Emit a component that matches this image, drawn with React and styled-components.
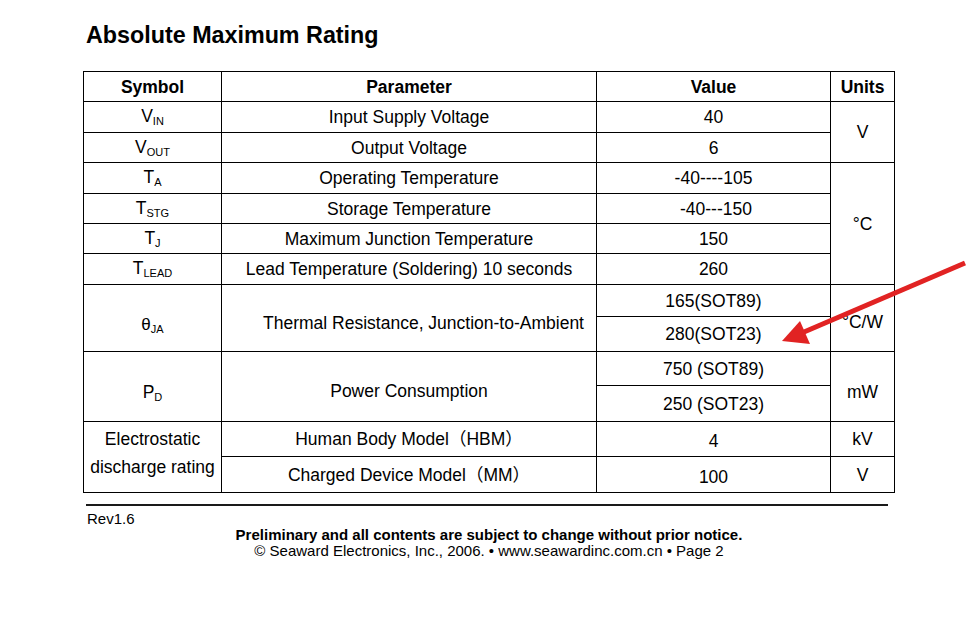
import React from 'react';
import styled, { createGlobalStyle } from 'styled-components';

const GlobalStyle = createGlobalStyle`
  html, body {
    margin: 0;
    padding: 0;
    background: #fff;
  }
  body {
    font-family: "Liberation Sans", Arial, "Noto Sans CJK SC", sans-serif;
    color: #000;
  }
`;

const Page = styled.div`
  position: relative;
  width: 978px;
  height: 635px;
  overflow: hidden;
  padding-top: 23px;
  box-sizing: border-box;
`;

const Title = styled.h1`
  margin: 0 0 22px 86px;
  font-size: 23.3px;
  line-height: 25.7px;
  font-weight: 700;
`;

const Table = styled.div`
  display: grid;
  grid-template-columns: 138px 375px 234px 64px;
  grid-template-rows: 30px 31px 30px 31px 30px 30px 31px 32px 35px 34px 36px 35px 36px;
  margin-left: 83px;
  width: max-content;
  border-left: 1px solid #000;
  border-top: 1px solid #000;
`;

const Cell = styled.div`
  grid-column: ${(p) => p.$col} / span ${(p) => p.$colSpan || 1};
  grid-row: ${(p) => p.$row} / span ${(p) => p.$rowSpan || 1};
  display: flex;
  align-items: center;
  justify-content: center;
  text-align: center;
  box-sizing: border-box;
  border-right: 1px solid #000;
  border-bottom: 1px solid #000;
  font-size: 17.5px;
  line-height: ${(p) => p.$lineHeight || 20}px;
  font-weight: ${(p) => (p.$head ? 700 : 400)};
  padding-top: ${(p) => p.$drop || 1}px;
  padding-bottom: ${(p) => p.$raise || 0}px;
  padding-left: ${(p) => p.$indent || 0}px;
  white-space: nowrap;
`;

const Sub = styled.span`
  font-size: 11px;
  position: relative;
  top: 3px;
`;

const Theta = styled.span`
  font-size: 17px;
`;

const Rule = styled.div`
  width: 802px;
  height: 2px;
  background: #1a1a1a;
  margin: 11px 0 0 86px;
`;

const Rev = styled.div`
  margin: 5px 0 0 87px;
  font-size: 15px;
  line-height: 16px;
`;

const Notice = styled.div`
  width: 978px;
  text-align: center;
  font-size: 15px;
  line-height: 16px;
  font-weight: ${(p) => (p.$bold ? 700 : 400)};
`;

const Overlay = styled.svg`
  position: absolute;
  left: 0;
  top: 0;
  pointer-events: none;
`;

const Sym = ({ base, sub }) => (
  <span>
    {base}
    <Sub>{sub}</Sub>
  </span>
);

const rows = [
  { base: 'V', sub: 'IN', param: 'Input Supply Voltage', value: '40' },
  { base: 'V', sub: 'OUT', param: 'Output Voltage', value: '6' },
  { base: 'T', sub: 'A', param: 'Operating Temperature', value: '-40----105' },
  { base: 'T', sub: 'STG', param: 'Storage Temperature', value: '\u00a0-40---150' },
  { base: 'T', sub: 'J', param: 'Maximum Junction Temperature', value: '150' },
  { base: 'T', sub: 'LEAD', param: 'Lead Temperature (Soldering) 10 seconds', value: '260' },
];

export default function App() {
  return (
    <>
      <GlobalStyle />
      <Page>
        <Title>Absolute Maximum Rating</Title>
        <Table>
          <Cell $col={1} $row={1} $head>Symbol</Cell>
          <Cell $col={2} $row={1} $head>Parameter</Cell>
          <Cell $col={3} $row={1} $head>Value</Cell>
          <Cell $col={4} $row={1} $head>Units</Cell>

          {rows.map((r, i) => (
            <React.Fragment key={r.param}>
              <Cell $col={1} $row={i + 2}>
                <Sym base={r.base} sub={r.sub} />
              </Cell>
              <Cell $col={2} $row={i + 2}>{r.param}</Cell>
              <Cell $col={3} $row={i + 2}>{r.value}</Cell>
            </React.Fragment>
          ))}
          <Cell $col={4} $row={2} $rowSpan={2}>V</Cell>
          <Cell $col={4} $row={4} $rowSpan={4}>°C</Cell>

          <Cell $col={1} $row={8} $rowSpan={2} $drop={14}>
            <span>
              <Theta>θ</Theta>
              <Sub>JA</Sub>
            </span>
          </Cell>
          <Cell $col={2} $row={8} $rowSpan={2} $drop={10} $indent={29}>
            Thermal Resistance, Junction-to-Ambient
          </Cell>
          <Cell $col={3} $row={8}>165(SOT89)</Cell>
          <Cell $col={3} $row={9}>280(SOT23)</Cell>
          <Cell $col={4} $row={8} $rowSpan={2} $drop={9}>°C/W</Cell>

          <Cell $col={1} $row={10} $rowSpan={2} $drop={14}>
            <Sym base="P" sub="D" />
          </Cell>
          <Cell $col={2} $row={10} $rowSpan={2} $drop={10}>Power Consumption</Cell>
          <Cell $col={3} $row={10}>750 (SOT89)</Cell>
          <Cell $col={3} $row={11}>250 (SOT23)</Cell>
          <Cell $col={4} $row={10} $rowSpan={2} $drop={11}>mW</Cell>

          <Cell $col={1} $row={12} $rowSpan={2} $lineHeight={28} $drop={0} $raise={8}>
            Electrostatic
            <br />
            discharge rating
          </Cell>
          <Cell $col={2} $row={12}>Human Body Model（HBM）</Cell>
          <Cell $col={2} $row={13}>Charged Device Model（MM）</Cell>
          <Cell $col={3} $row={12} $drop={4}>4</Cell>
          <Cell $col={3} $row={13} $drop={6}>100</Cell>
          <Cell $col={4} $row={12}>kV</Cell>
          <Cell $col={4} $row={13}>V</Cell>
        </Table>

        <Rule />
        <Rev>Rev1.6</Rev>
        <Notice $bold>Preliminary and all contents are subject to change without prior notice.</Notice>
        <Notice>© Seaward Electronics, Inc., 2006. • www.seawardinc.com.cn • Page 2</Notice>

        <Overlay width="978" height="635" viewBox="0 0 978 635">
          <line x1="965" y1="263" x2="804" y2="332" stroke="#e12323" strokeWidth="5" />
          <polygon points="782,341 800,321 810,344" fill="#e12323" />
        </Overlay>
      </Page>
    </>
  );
}
